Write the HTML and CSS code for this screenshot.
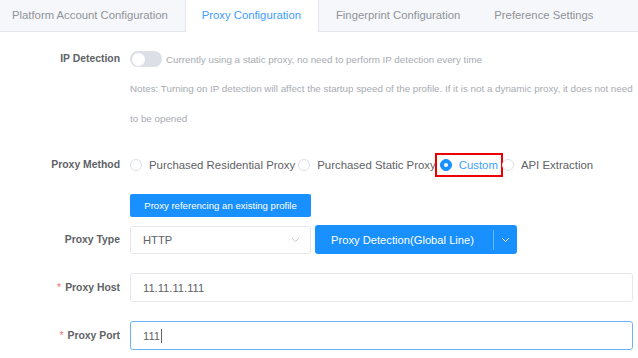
FILE: index.html
```html
<!DOCTYPE html>
<html lang="en">
<head>
<meta charset="utf-8">
<title>Proxy Configuration</title>
<link rel="stylesheet" href="styles.css">
</head>
<body>
<div class="tabs">
  <div class="tab first">Platform Account Configuration</div>
  <div class="tab active">Proxy Configuration</div>
  <div class="tab">Fingerprint Configuration</div>
  <div class="tab">Preference Settings</div>
</div>
<div class="form">
  <div class="row row-ip">
    <div class="label">IP Detection</div>
    <div class="content">
      <div class="switch-line">
        <span class="switch"><span class="knob"></span></span>
        <span class="hint">Currently using a static proxy, no need to perform IP detection every time</span>
      </div>
      <p class="notes">Notes: Turning on IP detection will affect the startup speed of the profile. If it is not a dynamic proxy, it does not need to be opened</p>
    </div>
  </div>

  <div class="row row-method">
    <div class="label">Proxy Method</div>
    <div class="content radios">
      <span class="radio"><span class="dot"></span><span class="rtext">Purchased Residential Proxy</span></span>
      <span class="radio"><span class="dot"></span><span class="rtext">Purchased Static Proxy</span></span>
      <span class="radio checked"><span class="dot"></span><span class="rtext">Custom</span><span class="mark"></span></span>
      <span class="radio"><span class="dot"></span><span class="rtext">API Extraction</span></span>
    </div>
  </div>

  <div class="row row-btn">
    <div class="label"></div>
    <div class="content"><button class="btn small">Proxy referencing an existing profile</button></div>
  </div>

  <div class="row row-type">
    <div class="label">Proxy Type</div>
    <div class="content type-line">
      <div class="select">
        <span>HTTP</span>
        <svg class="chev" width="9" height="6" viewBox="0 0 9 6"><path d="M1 1l3.5 3.5L8 1" fill="none" stroke="#c0c4cc" stroke-width="1"/></svg>
      </div>
      <div class="split">
        <span class="split-main">Proxy Detection(Global Line)</span>
        <span class="split-sep"></span>
        <span class="split-drop"><svg width="9" height="6" viewBox="0 0 9 6"><path d="M1 1l3.5 3.5L8 1" fill="none" stroke="#fff" stroke-width="1"/></svg></span>
      </div>
    </div>
  </div>

  <div class="row row-field">
    <div class="label"><span class="req">*</span>Proxy Host</div>
    <div class="content"><div class="input">11.11.11.111</div></div>
  </div>

  <div class="row row-field">
    <div class="label"><span class="req">*</span>Proxy Port</div>
    <div class="content"><div class="input focus">111<span class="caret"></span></div></div>
  </div>
</div>
</body>
</html>
```

FILE: styles.css
```css
* { box-sizing: border-box; }
html, body { margin: 0; padding: 0; background: #fff; }
body {
  font-family: "Liberation Sans", Arial, sans-serif;
  width: 638px;
  height: 358px;
  overflow: hidden;
}

.tabs {
  display: flex;
  height: 32px;
  background: #f5f7fa;
  border-bottom: 1px solid #e4e7ed;
}
.tab {
  padding: 0 17px;
  line-height: 31px;
  font-size: 11.3px;
  color: #909399;
  white-space: nowrap;
}
.tab.first { padding-left: 12px; }
.tab.active {
  background: #fff;
  color: #409eff;
  border-left: 1px solid #e4e7ed;
  border-right: 1px solid #e4e7ed;
  height: 32px;
  padding-left: 16px;
}

.form { padding: 12px 5px 0 0; }
.row { display: flex; }
.label {
  width: 120px;
  flex: none;
  text-align: right;
  font-size: 10.4px;
  font-weight: bold;
  color: #606266;
  margin-right: 10px;
  white-space: nowrap;
}
.content { flex: 1; min-width: 0; }

.row-ip .label { line-height: 30px; }
.switch-line { display: flex; align-items: center; height: 30px; }
.switch {
  width: 32px;
  height: 16px;
  border-radius: 8px;
  background: #dcdfe6;
  position: relative;
  flex: none;
}
.knob {
  position: absolute;
  left: 1.5px;
  top: 1.5px;
  width: 13px;
  height: 13px;
  border-radius: 50%;
  background: #fff;
}
.hint { margin-left: 4px; font-size: 9.8px; color: #a8abb2; }
.notes {
  margin: 0;
  font-size: 9.8px;
  line-height: 30px;
  color: #a8abb2;
}

.row-method { margin-top: 16px; }
.row-method .label { line-height: 30px; }
.radios { display: flex; align-items: center; height: 30px; }
.radio {
  display: flex;
  align-items: center;
  height: 30px;
  margin-right: 4px;
  position: relative;
  font-size: 11.4px;
  color: #606266;
  white-space: nowrap;
}
.radio:first-child { margin-right: 3px; }
.dot {
  width: 12px;
  height: 12px;
  border-radius: 50%;
  border: 1px solid #dcdfe6;
  background: #fff;
  margin-right: 7px;
  flex: none;
  position: relative;
}
.radio.checked .dot { background: #1890ff; border-color: #1890ff; }
.radio.checked .dot::after {
  content: "";
  position: absolute;
  left: 3px;
  top: 3px;
  width: 4px;
  height: 4px;
  border-radius: 50%;
  background: #fff;
}
.radio.checked .rtext { color: #409eff; }
.mark {
  position: absolute;
  left: -5px;
  right: -5px;
  top: 3px;
  bottom: 3px;
  border: 2px solid #ee0000;
}

.row-btn { margin-top: 14px; }
.btn {
  font-family: inherit;
  border: none;
  background: #1890ff;
  color: #fff;
  border-radius: 2px;
  cursor: pointer;
}
.btn.small {
  height: 23px;
  width: 181px;
  font-size: 9.6px;
  padding: 0;
}

.row-type { margin-top: 8px; }
.row-type .label { line-height: 29px; }
.type-line { display: flex; align-items: center; height: 29px; }
.select {
  width: 181px;
  height: 28px;
  border: 1px solid #e4e7ed;
  border-radius: 3px;
  display: flex;
  align-items: center;
  justify-content: space-between;
  padding: 0 10px 0 12px;
  font-size: 11.2px;
  color: #606266;
}
.split {
  margin-left: 4px;
  height: 29px;
  width: 202px;
  background: #1890ff;
  border-radius: 3px;
  display: flex;
  align-items: center;
  color: #fff;
  font-size: 11.2px;
}
.split-main { padding-left: 16px; width: 178px; }
.split-sep { width: 1px; height: 20px; background: rgba(255,255,255,0.35); }
.split-drop { flex: 1; display: flex; justify-content: center; }

.row-field { margin-top: 19px; }
.row-field .label { line-height: 29px; }
.req { color: #f56c6c; margin-right: 4px; font-weight: normal; }
.input {
  height: 29px;
  border: 1px solid #e4e7ed;
  border-radius: 3px;
  padding: 0 12px;
  display: flex;
  align-items: center;
  font-size: 11.2px;
  color: #606266;
}
.input.focus { border-color: #6cb3ff; }
.caret {
  display: inline-block;
  width: 1px;
  height: 14px;
  background: #606266;
  margin-left: 1px;
}
```
